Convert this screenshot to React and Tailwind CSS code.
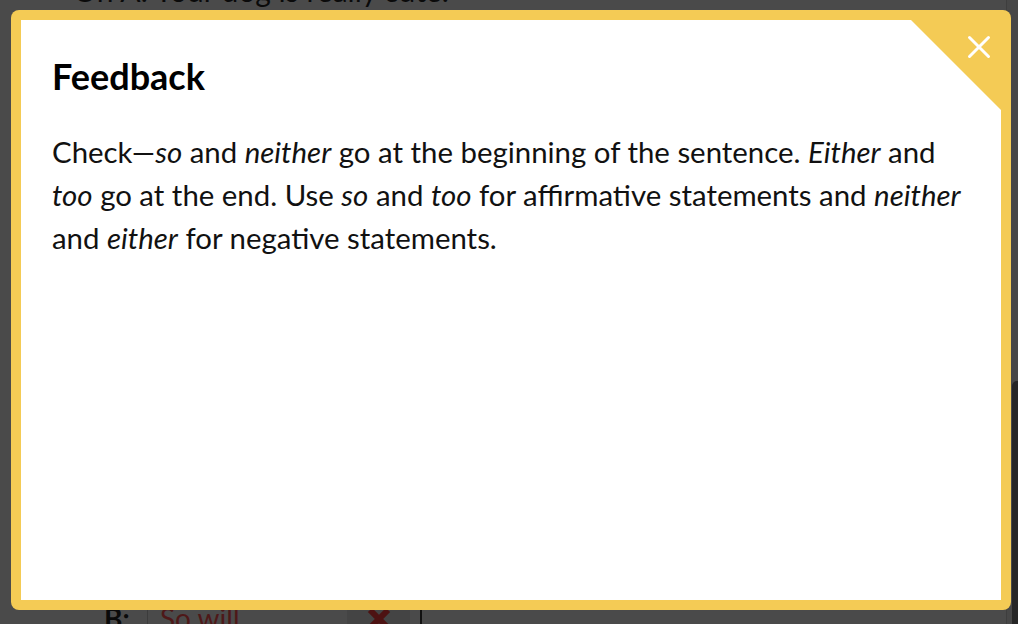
export default function App() {
  return (
    <div
      className="relative h-[624px] w-[1018px] overflow-hidden bg-[#4a4a4a]"
      style={{ fontFamily: "Lato, 'Open Sans', sans-serif" }}
    >
      {/* dimmed page underneath */}
      <div className="flex h-full flex-col justify-between">
        <div className="mt-[-26px] pl-[73px] text-[30px] leading-[32px] text-[#0a0a0a]">
          Oh A: Your dog is really cute.
        </div>
        <div className="mb-[-14px] flex items-center gap-0 pl-[104px]">
          <span className="w-[43px] text-[28px] font-bold leading-[34px] text-[#0a0a0a]">B:</span>
          <div className="flex h-[40px] w-[200px] items-center border-l border-[#3c3c3c] bg-[#4a4a4a] pl-[12px] text-[28px] text-[#4e1818]">
            So will
          </div>
          <div className="flex h-[40px] w-[63px] items-start justify-center bg-[#444444] pt-[8px]">
            <svg width="26" height="26" viewBox="0 0 26 26">
              <path d="M4 4 L22 22 M22 4 L4 22" stroke="#4d1212" strokeWidth="6" />
            </svg>
          </div>
          <div className="ml-[10px] h-[30px] w-[2px] bg-[#111]" />
        </div>
      </div>
      <div className="absolute right-0 top-0 h-full w-[12px] border-l border-[#3e3e3e] bg-[#474747]" />
      <div className="absolute right-0 top-[381px] h-[260px] w-[6px] rounded-tl-[5px] bg-[#262626]" />

      {/* modal */}
      <div className="absolute left-[11px] top-[10px] h-[600px] w-[1000px] rounded-[8px] bg-[#f4cb55] p-[10px]">
        <div className="relative h-full w-full bg-white pl-[31px] pr-[30px] pt-[34px]">
          <div
            className="absolute right-0 top-0 h-[90px] w-[90px] bg-[#f4cb55]"
            style={{ clipPath: "polygon(0 0, 100% 0, 100% 100%)" }}
          />
          <button className="absolute right-[10px] top-[15px] flex h-[24px] w-[24px] items-center justify-center">
            <svg width="24" height="24" viewBox="0 0 24 24">
              <path d="M2.5 2.5 L21.5 21.5 M21.5 2.5 L2.5 21.5" stroke="#ffffff" strokeWidth="3" strokeLinecap="round" />
            </svg>
          </button>
          <h1 className="text-[36px] font-bold leading-[44px] text-black">Feedback</h1>
          <p className="mt-[32px] text-[29.4px] leading-[43px] text-[#111]">
            Check—<i>so</i> and <i>neither</i> go at the beginning of the sentence. <i>Either</i> and{" "}
            <i>too</i> go at the end. Use <i>so</i> and <i>too</i> for affirmative statements and <i>neither</i>{" "}
            and <i>either</i> for negative statements.
          </p>
        </div>
      </div>
    </div>
  );
}
